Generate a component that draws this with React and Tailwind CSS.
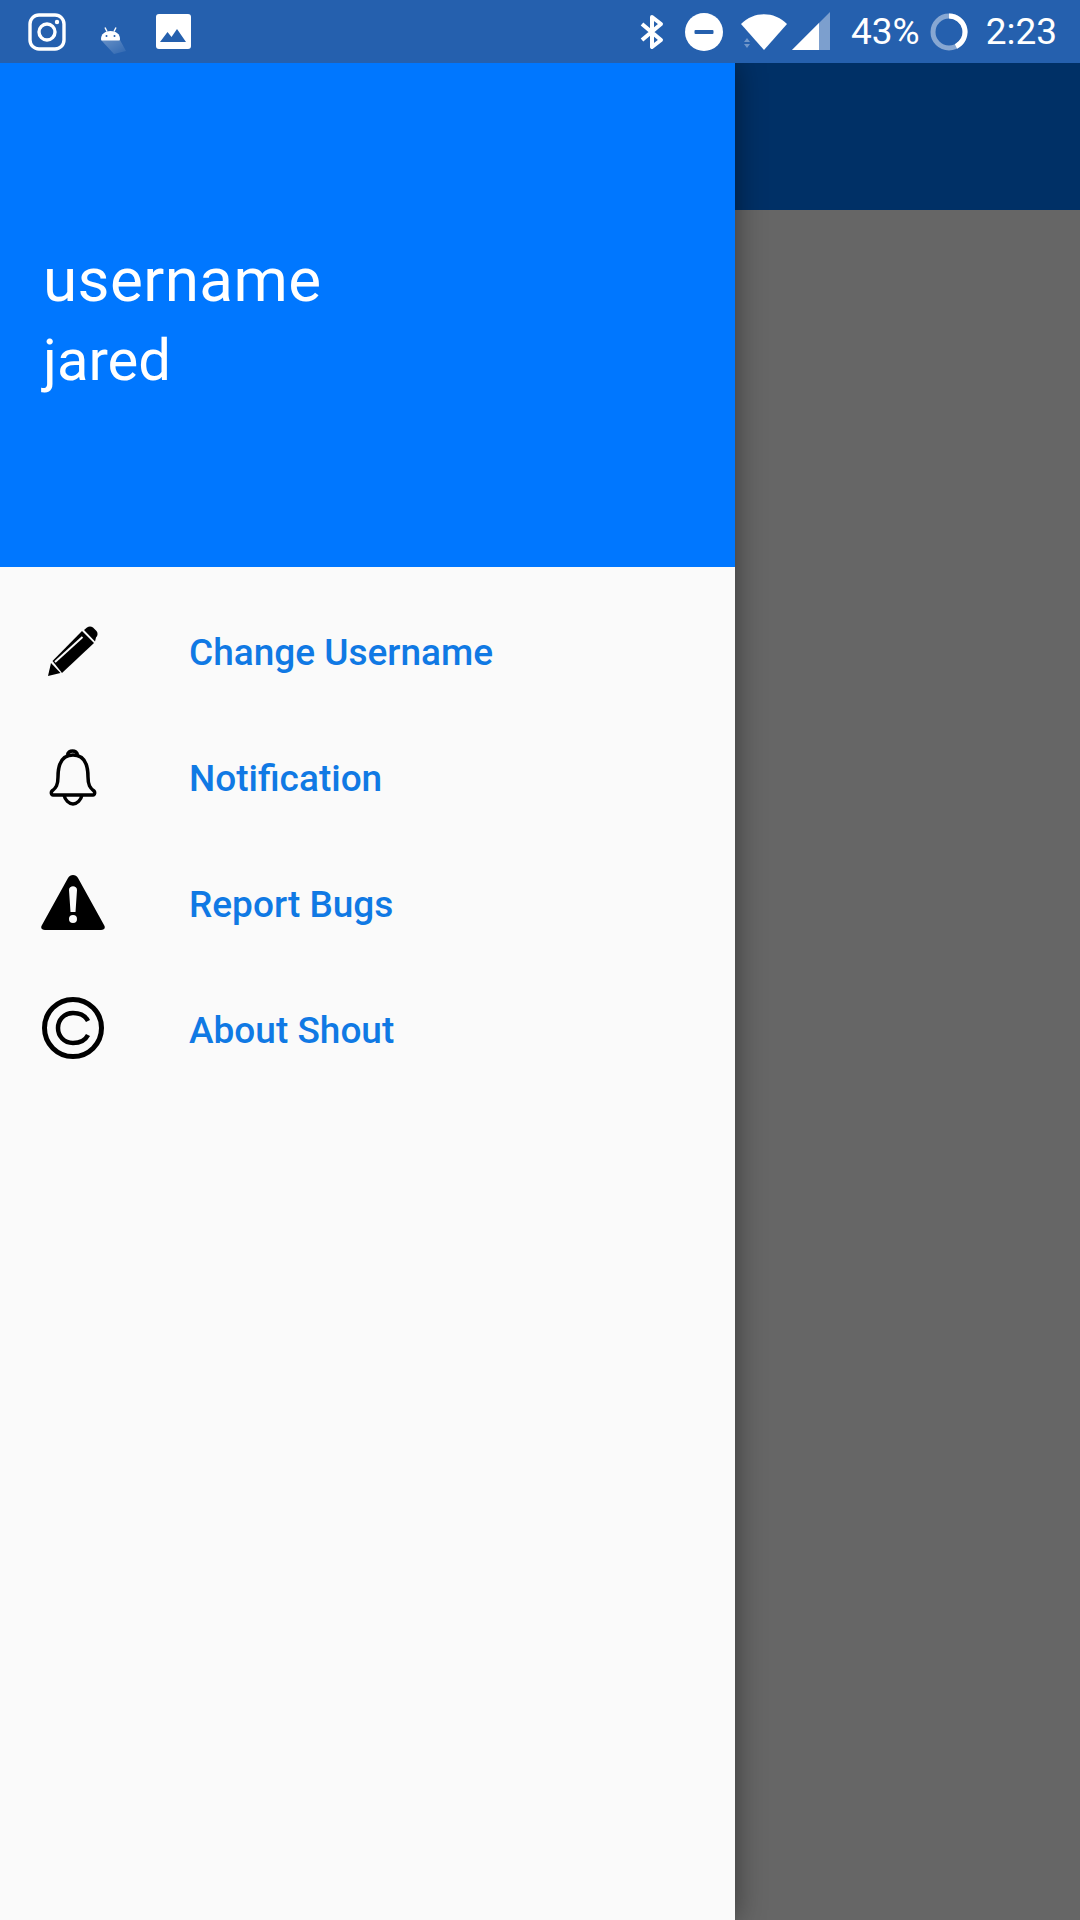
const font = { roboto: 'font-["Roboto",sans-serif]' };

const InstagramIcon = () => (
  <svg width="38" height="38" viewBox="0 0 38 38" fill="none" stroke="#fff">
    <rect x="2" y="2" width="34" height="34" rx="9" strokeWidth="3.4" />
    <circle cx="19" cy="19" r="8" strokeWidth="3.4" />
    <circle cx="29" cy="9" r="2.2" fill="#fff" stroke="none" />
  </svg>
);

const AndroidIcon = () => (
  <svg width="30" height="28" viewBox="0 0 30 28">
    <defs>
      <linearGradient id="androidShadow" x1="0" y1="0" x2="1" y2="1">
        <stop offset="0" stopColor="#fff" stopOpacity="0.3" />
        <stop offset="1" stopColor="#fff" stopOpacity="0.05" />
      </linearGradient>
    </defs>
    <path d="M1 13 L14 27 L26 24 L20 13 Z" fill="url(#androidShadow)" />
    <path d="M1 12c0-5 4-8 9.500-8S20 7 20 12c0 1-.5 1.500-1.500 1.500h-16C1.500 13.500 1 13 1 12z" fill="#fff" />
    <path d="M5 0.500 L7 4.500 M16 0.500 L14 4.500" stroke="#fff" strokeWidth="1.400" />
    <circle cx="6.500" cy="9" r="1" fill="#2560ae" />
    <circle cx="14.500" cy="9" r="1" fill="#2560ae" />
  </svg>
);

const ImageIcon = () => (
  <svg width="35" height="35" viewBox="0 0 35 35">
    <rect width="35" height="35" rx="3" fill="#fff" />
    <path d="M4 28 L11.500 18 L15.500 23 L21 15 L30 28 Z" fill="#2560ae" />
  </svg>
);

const BluetoothIcon = () => (
  <svg width="24" height="36" viewBox="0 0 24 36" fill="none" stroke="#fff" strokeWidth="4">
    <path d="M2 10 L21 26 L12 33 L12 3 L21 10 L2 26" strokeLinejoin="round" />
  </svg>
);

const DndIcon = () => (
  <svg width="38" height="38" viewBox="0 0 38 38">
    <circle cx="19" cy="19" r="19" fill="#fff" />
    <rect x="9.500" y="17" width="19" height="4" rx="1" fill="#2560ae" />
  </svg>
);

const WifiIcon = () => (
  <svg width="46" height="36" viewBox="0 0 46 36">
    <path d="M0 10 C13 -3 33 -3 46 10 L23 36 Z" fill="#fff" />
    <path d="M3 28 L6 24 L9 28 Z M3 30 L9 30 L6 34 Z" fill="#fff" opacity="0.35" />
  </svg>
);

const SignalIcon = () => (
  <svg width="38" height="38" viewBox="0 0 38 38">
    <path d="M0 38 L38 0 L38 38 Z" fill="#fff" opacity="0.4" />
    <path d="M0 38 L27 11 L27 38 Z" fill="#fff" />
  </svg>
);

const BatteryRing = () => (
  <svg width="38" height="38" viewBox="0 0 38 38" fill="none">
    <circle cx="19" cy="19" r="16" stroke="#fff" strokeOpacity="0.45" strokeWidth="5" />
    <path d="M19 3 A16 16 0 0 1 26 33.400" stroke="#fff" strokeWidth="5" />
  </svg>
);

const PencilIcon = () => (
  <svg width="50" height="50" viewBox="0 0 50 50">
    <path d="M0 50 L3 37 L12.500 47 Z" fill="#000" />
    <path d="M4.500 35 L34 5 L46 17 L14 47 Z" fill="#000" />
    <path d="M7 36 L34.500 11" stroke="#fafafa" strokeWidth="2" />
    <path d="M36 4 L39 1.500 C41 0 43 0 45 1.500 L48.500 5 C50 7 50 9.500 48 11.500 L47 15.500 Z" fill="#000" />
  </svg>
);

const BellIcon = () => (
  <svg width="48" height="58" viewBox="0 0 48 58" fill="none" stroke="#000" strokeWidth="3.500" strokeLinejoin="round">
    <path d="M18.500 6 C19 0.500 28 0.500 28.500 6" />
    <path d="M9 28 C9 12 15 6 24 6 C33 6 39 12 39 28 C39 36 41 39 45 42 C46 43 46 46 44 46 L4 46 C2 46 2 43 3 42 C7 39 9 36 9 28 Z" />
    <path d="M15 46 C16 51 20 55 24 55 C28 55 32 51 33 46" />
  </svg>
);

const WarningIcon = () => (
  <svg width="64" height="56" viewBox="0 0 64 56">
    <path
      fillRule="evenodd"
      d="M27 3 C29 -1 35 -1 37 3 L63 50 C65 53 63 55 60 55 L4 55 C1 55 -1 53 1 50 Z M28 15 L29.500 37 L34.500 37 L36 15 C36 10 28 10 28 15 Z M32 40 A4 4 0 1 0 32 48 A4 4 0 1 0 32 40 Z"
      fill="#000"
    />
  </svg>
);

const CopyrightIcon = () => (
  <svg width="62" height="62" viewBox="0 0 62 62" fill="none" stroke="#000">
    <circle cx="31" cy="31" r="28.500" strokeWidth="5" />
    <path d="M46 24 C43 18 37 16 31 16 C22 16 16 23 16 31 C16 39 22 46 31 46 C37 46 43 44 46 38" strokeWidth="4.500" />
  </svg>
);

const menuItems = [
  { label: 'Change Username', icon: <PencilIcon />, nudge: '-mt-[2px]' },
  { label: 'Notification', icon: <BellIcon />, nudge: '' },
  { label: 'Report Bugs', icon: <WarningIcon />, nudge: '-mt-[2px]' },
  { label: 'About Shout', icon: <CopyrightIcon />, nudge: '-mt-[4px]' },
];

export default function App() {
  return (
    <div className={`flex h-[1920px] w-[1080px] flex-col overflow-hidden bg-[#666] ${font.roboto}`}>
      {/* Status bar */}
      <div className="relative z-20 flex h-[63px] shrink-0 items-center bg-[#2560ae] text-white">
        <div className="ml-[28px] flex items-center">
          <InstagramIcon />
          <div className="ml-[34px] mt-[18px]">
            <AndroidIcon />
          </div>
          <div className="ml-[26px]">
            <ImageIcon />
          </div>
        </div>
        <div className="ml-auto flex items-center pr-[23px]">
          <BluetoothIcon />
          <div className="ml-[21px]">
            <DndIcon />
          </div>
          <div className="ml-[18px]">
            <WifiIcon />
          </div>
          <div className="ml-[5px] -mt-[1px]">
            <SignalIcon />
          </div>
          <span className="ml-[21px] text-[37px] leading-none">43%</span>
          <div className="ml-[10px]">
            <BatteryRing />
          </div>
          <span className="ml-[18px] text-[37px] leading-none">2:23</span>
        </div>
      </div>

      <div className="flex min-h-0 flex-1">
        {/* Drawer */}
        <div className="relative z-10 flex w-[735px] shrink-0 flex-col bg-[#fafafa] shadow-[0_0_28px_rgba(0,0,0,0.45)]">
          <div className="flex h-[504px] flex-col justify-center bg-[#0077ff] pl-[43px] pt-[9px] font-normal leading-[81px] text-white">
            <div className="text-[62px] tracking-[0.4px]">username</div>
            <div className="text-[58px]">jared</div>
          </div>
          <div className="pt-[22px]">
            {menuItems.map((item) => (
              <div key={item.label} className="flex h-[126px] items-center">
                <div className={`flex w-[189px] justify-start pl-[41px] ${item.nudge}`}>
                  <div className="flex w-[64px] justify-center">{item.icon}</div>
                </div>
                <span className="mt-[2px] text-[37px] font-medium text-[#1079e4]">{item.label}</span>
              </div>
            ))}
          </div>
        </div>

        {/* Dimmed page behind the drawer */}
        <div className="flex flex-1 flex-col">
          <div className="h-[147px] bg-[#003066] shadow-[0_2px_6px_rgba(0,0,0,0.25)]" />
          <div className="flex-1 bg-[#666]" />
        </div>
      </div>
    </div>
  );
}
